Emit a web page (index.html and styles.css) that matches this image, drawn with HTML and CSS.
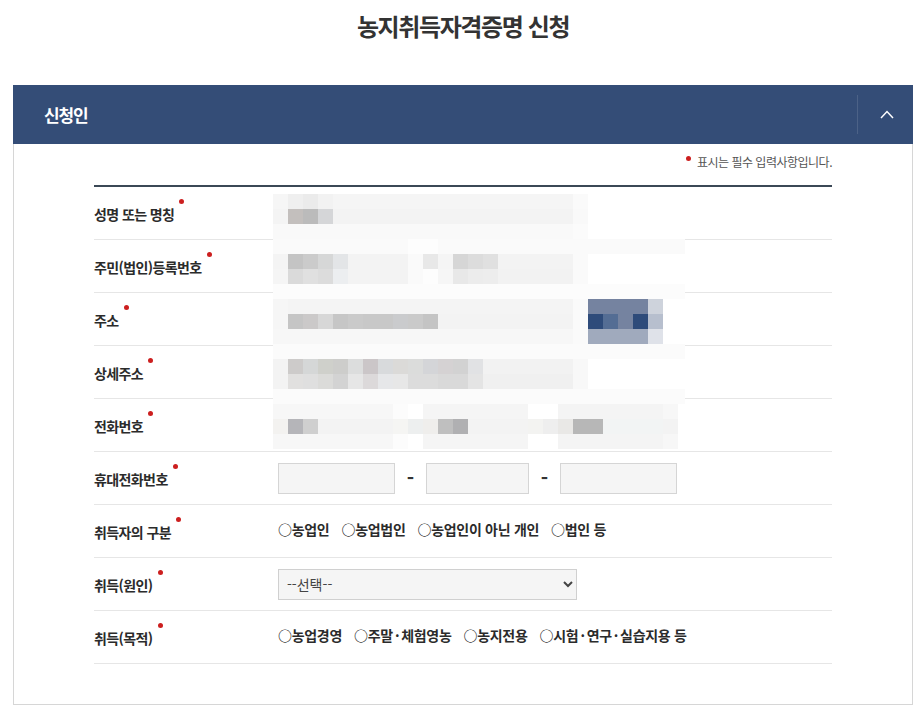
FILE: index.html
```html
<!DOCTYPE html>
<html lang="ko">
<head>
  <meta charset="UTF-8" />
  <meta name="viewport" content="width=device-width, initial-scale=1.0" />
  <title>농지취득자격증명 신청</title>
  <link rel="stylesheet" href="styles.css">
</head>
<body>

<div class="page">
  <h1>농지취득자격증명 신청</h1>

  <div class="panel">
    <div class="panel-head">
      <div class="panel-title">신청인</div>
      <button type="button" class="panel-toggle" aria-label="접기">
        <svg width="14" height="9" viewBox="0 0 14 9"><polyline points="1,8 7,1.5 13,8" fill="none" stroke="#fff" stroke-width="1.5"/></svg>
      </button>
    </div>

    <div class="panel-body">
      <p class="note"><span class="req"></span> 표시는 필수 입력사항입니다.</p>

      <div class="form" id="form">
        <div class="row"><div class="label">성명 또는 명칭<span class="req"></span></div><div class="value"></div></div>
        <div class="row"><div class="label">주민(법인)등록번호<span class="req"></span></div><div class="value"></div></div>
        <div class="row"><div class="label">주소<span class="req"></span></div><div class="value"></div></div>
        <div class="row"><div class="label">상세주소<span class="req"></span></div><div class="value"></div></div>
        <div class="row"><div class="label">전화번호<span class="req"></span></div><div class="value"></div></div>
        <div class="row">
          <div class="label">휴대전화번호<span class="req"></span></div>
          <div class="value tel">
            <input type="text" class="tel-input">
            <span class="dash">-</span>
            <input type="text" class="tel-input mid">
            <span class="dash">-</span>
            <input type="text" class="tel-input">
          </div>
        </div>
        <div class="row">
          <div class="label">취득자의 구분<span class="req"></span></div>
          <div class="value radios">
            <span>○농업인</span>
            <span>○농업법인</span>
            <span>○농업인이 아닌 개인</span>
            <span>○법인 등</span>
          </div>
        </div>
        <div class="row">
          <div class="label">취득(원인)<span class="req"></span></div>
          <div class="value">
            <select class="select">
              <option>--선택--</option>
            </select>
          </div>
        </div>
        <div class="row">
          <div class="label">취득(목적)<span class="req"></span></div>
          <div class="value radios">
            <span>○농업경영</span>
            <span>○주말<span class="mdot">·</span>체험영농</span>
            <span>○농지전용</span>
            <span>○시험<span class="mdot">·</span>연구<span class="mdot">·</span>실습지용 등</span>
          </div>
        </div>

        <div class="redact" id="redact"></div>
      </div>
    </div>
  </div>
</div>

<script>
  // pixelated (masked) personal data, one entry per 15px line: [colour, cells]
  const mask = [
    [["f6f6f6",1],["efefef",1],["ebebeb",1],["f2f2f2",1],["f5f5f5",16],["fafafa",1]],
    [["f4f4f4",1],["c3bfbd",1],["bbbbbb",1],["d5d6d8",1],["f3f3f3",16],["f9f9f9",1]],
    [["f9f9f9",20],["fbfbfb",1]],
    [["fafafa",9],["fdfdfd",2],["fafafa",17]],
    [["f4f4f4",1],["c4c4c4",1],["cbcbcb",1],["d6d7d7",1],["e3e5e7",1],["f3f3f3",4],["fafafa",1],["e8e8e8",1],["f5f5f5",1],["d6d6d6",1],["dcdcdc",1],["e0e0e0",1],["f3f3f3",5],["fafafa",1]],
    [["f5f5f5",1],["dadada",1],["e0e0e0",1],["dcdcdc",1],["eceef0",1],["f3f3f3",4],["fafafa",1],["fdfdfd",1],["f6f6f6",1],["e8e8e8",1],["ececec",1],["ededed",1],["f2f2f2",5],["fafafa",1]],
    [["fcfcfc",28]],
    [["f6f6f6",1],["f4f4f4",19],["fafafa",1],["7583a0",4],["ced3dc",1]],
    [["f6f6f6",1],["c5c5c5",1],["cbc9c9",1],["d7d7d7",1],["c6c6c6",1],["cacaca",1],["c8c8c8",2],["cacbcd",1],["cacaca",1],["c4c4c4",1],["f3f3f3",9],["fafafa",1],["2e4b7a",1],["546d94",1],["7583a0",1],["2e4b7a",1],["b7bfce",1]],
    [["f7f7f7",20],["fafafa",1],["a0aabd",4],["dfe2e9",1]],
    [["fbfbfb",28]],
    [["f3f3f3",1],["cdcbca",1],["d5d7d7",1],["cfd0cb",1],["cdcdcb",1],["dcdddd",1],["cbc6c8",1],["d8dadc",1],["dbdad8",1],["dbdcdb",1],["d4d5d8",1],["d5d2d3",1],["d2d2d2",1],["e1e2e4",1],["f2f2f2",6],["f8f8f8",1]],
    [["f3f3f3",1],["e1e0df",1],["dfdfdf",1],["dbdbd9",1],["d3d3d3",1],["e6e6e6",1],["dcd9da",1],["e6e7e9",1],["e7e7e7",1],["dcdcdc",2],["d9d9d9",2],["e4e4e4",1],["f0f0f0",6],["f8f8f8",1]],
    [["fbfbfb",28]],
    [["f7f7f7",8],["fcfcfc",1],["ffffff",1],["f5f5f5",7],["ffffff",2],["f4f4f4",7],["f7f7f7",1]],
    [["f3f2f0",1],["b5b5b9",1],["cfcfcf",1],["f3f3f3",5],["f5f5f3",1],["edefef",1],["efeeec",1],["bfbfbf",1],["b0b0b2",1],["f3f3f3",4],["f3f3f1",1],["eeeeee",1],["e9e8e6",1],["b7b7b7",2],["f2f4f4",4],["f3f3f3",1]],
    [["f7f7f7",8],["fcfcfc",1],["ffffff",1],["f5f5f5",7],["ffffff",2],["f4f4f4",7],["f7f7f7",1]]
  ];

  const redact = document.getElementById("redact");
  mask.forEach(line => {
    const div = document.createElement("div");
    div.className = "redact-line";
    line.forEach(([color, n]) => {
      const cell = document.createElement("span");
      cell.style.width = (n * 15) + "px";
      cell.style.background = "#" + color;
      div.appendChild(cell);
    });
    redact.appendChild(div);
  });
</script>

</body>
</html>
```

FILE: styles.css
```css
* { box-sizing: border-box; }
body {
  margin: 0;
  font-family: "Noto Sans CJK KR", "Noto Sans", sans-serif;
  background: #fff;
  color: #333;
}
.page {
  padding: 0 10px 0 13px;
}
h1 {
  margin: 0;
  height: 85px;
  padding-top: 8px;
  text-align: center;
  font-size: 24px;
  line-height: 36px;
  font-weight: bold;
  letter-spacing: -1.4px;
  color: #333;
}
.panel-head {
  display: flex;
  height: 59px;
  background: #344d77;
}
.panel-title {
  flex: 1;
  display: flex;
  align-items: center;
  padding-left: 31px;
  color: #fff;
  font-size: 17px;
  font-weight: bold;
  letter-spacing: -1.2px;
}
.panel-toggle {
  width: 56px;
  margin: 10px 0;
  padding: 0 0 0 2px;
  display: flex;
  align-items: center;
  justify-content: center;
  background: none;
  border: none;
  border-left: 1px solid rgba(255, 255, 255, 0.12);
  cursor: pointer;
}
.panel-body {
  border: 1px solid #d6d6d6;
  border-top: none;
  padding: 8px 80px 40px 80px;
}
.note {
  margin: 0 0 13px;
  text-align: right;
  font-size: 12px;
  line-height: 20px;
  color: #555;
  letter-spacing: -0.5px;
}
.note .req {
  margin: 0 3px 0 0;
  top: -6px;
}
.req {
  display: inline-block;
  width: 5px;
  height: 5px;
  border-radius: 50%;
  background: #cc1f1f;
  margin-left: 5px;
  position: relative;
  top: -16px;
}
.form {
  position: relative;
  border-top: 2px solid #3b4856;
}
.row {
  display: grid;
  grid-template-columns: 184px 1fr;
  align-items: center;
  height: 53px;
  border-bottom: 1px solid #e6e6e6;
}
.label {
  padding-top: 1px;
  font-size: 14px;
  font-weight: bold;
  letter-spacing: -0.6px;
  color: #2b2b2b;
  white-space: nowrap;
}
.value {
  display: flex;
  align-items: center;
}
.tel-input {
  width: 117px;
  height: 31px;
  background: #f5f5f5;
  border: 1px solid #d5d5d5;
  font-size: 14px;
}
.tel-input.mid {
  width: 103px;
}
.dash {
  width: 31px;
  text-align: center;
  font-size: 20px;
  line-height: 20px;
  font-weight: bold;
  color: #333;
}
.radios {
  gap: 12px;
  padding-bottom: 4px;
  font-size: 14px;
  font-weight: bold;
  letter-spacing: -0.3px;
  color: #2b2b2b;
}
.mdot {
  padding: 0 2px;
}
.select {
  width: 299px;
  height: 31px;
  padding-left: 4px;
  background: #f5f5f5;
  border: 1px solid #d0d0d0;
  border-radius: 0;
  font-family: inherit;
  font-size: 14px;
  color: #444;
}
.redact {
  position: absolute;
  left: 179px;
  top: 7px;
  width: 412px;
  overflow: hidden;
}
.redact-line {
  display: flex;
  height: 15px;
}
.redact-line span {
  flex: none;
  height: 15px;
}
```
